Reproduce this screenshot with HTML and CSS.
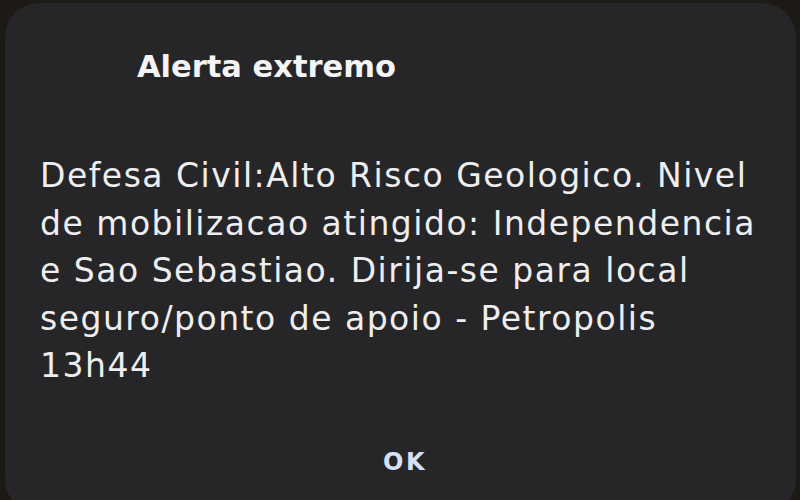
FILE: index.html
```html
<!DOCTYPE html>
<html lang="pt">
<head>
<meta charset="utf-8">
<link rel="stylesheet" href="styles.css">
</head>
<body>
<div class="dialog">
  <h1 class="title">Alerta extremo</h1>
  <p class="message">Defesa Civil:Alto Risco Geologico. Nivel<br>de mobilizacao atingido: Independencia<br>e Sao Sebastiao. Dirija-se para local<br>seguro/ponto de apoio - Petropolis<br>13h44</p>
  <div class="actions"><span class="ok">OK</span></div>
</div>
</body>
</html>
```

FILE: styles.css
```css
html, body {
  margin: 0;
  padding: 0;
  width: 800px;
  height: 500px;
  overflow: hidden;
  background: #1d1917;
}
.dialog {
  box-sizing: border-box;
  margin: 3px 4px 0 5px;
  height: 510px;
  background: #262628;
  border-radius: 34px;
  padding: 46px 10px 0 35px;
  font-family: "DejaVu Sans", sans-serif;
  color: #f2f2f4;
}
.title {
  margin: 0 0 0 97px;
  font-size: 30.5px;
  font-weight: 700;
  line-height: 36px;
  color: #f4f4f6;
}
.message {
  margin: 67px 0 0 0;
  font-size: 33px;
  font-weight: 400;
  letter-spacing: 1.5px;
  line-height: 47.5px;
  white-space: nowrap;
  color: #eeeef0;
}
.actions {
  display: flex;
  justify-content: center;
  margin-top: 58px;
  padding-right: 16px;
}
.ok {
  font-size: 24px;
  font-weight: 700;
  letter-spacing: 2.5px;
  color: #d6e0f8;
}
```
